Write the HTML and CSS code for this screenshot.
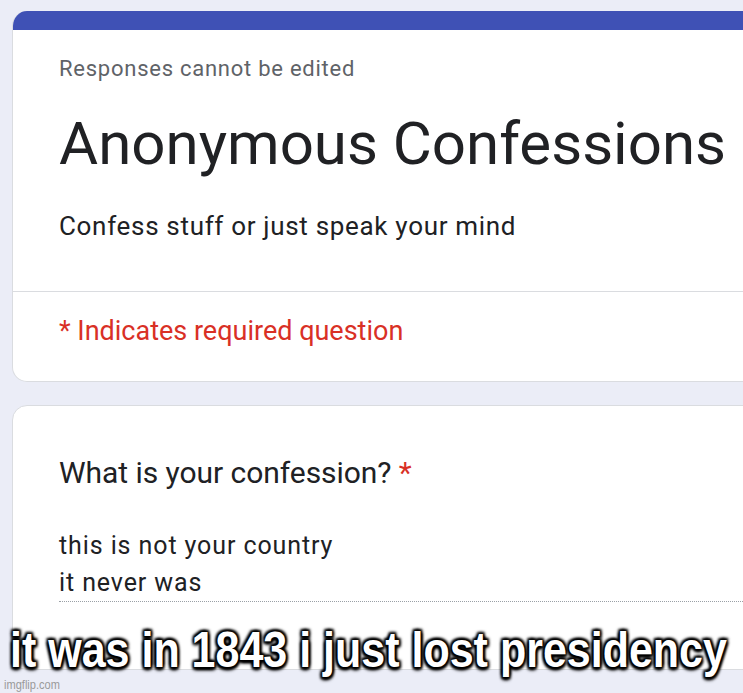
FILE: index.html
```html
<!DOCTYPE html>
<html>
<head>
<meta charset="utf-8">
<link rel="stylesheet" href="styles.css">
</head>
<body>
<div class="page">
  <div class="card header-card">
    <div class="top-bar"></div>
    <div class="header-body">
      <div class="note">Responses cannot be edited</div>
      <h1 class="title">Anonymous Confessions</h1>
      <div class="desc">Confess stuff or just speak your mind</div>
    </div>
    <div class="divider"></div>
    <div class="required">* Indicates required question</div>
  </div>
  <div class="card question-card">
    <div class="question">What is your confession? <span class="star">*</span></div>
    <div class="answer">this is not your country<br>it never was</div>
    <div class="dotted"></div>
  </div>
</div>
<div class="caption">it was in 1843 i just lost presidency</div>
<div class="watermark">imgflip.com</div>
</body>
</html>
```

FILE: styles.css
```css
html, body {
  margin: 0;
  padding: 0;
  width: 743px;
  height: 693px;
  overflow: hidden;
  background: #ebedf7;
  font-family: Roboto, "Liberation Sans", sans-serif;
  position: relative;
}
.page {
  padding: 11px 0 0 12px;
  display: flex;
  flex-direction: column;
  gap: 23px;
}
.card {
  width: 820px;
  background: #fff;
  border: 1px solid #dadce0;
  border-radius: 15px;
  box-sizing: border-box;
  overflow: hidden;
}
.header-card {
  height: 371px;
  border-top: none;
}
.top-bar {
  height: 19px;
  background: #3f51b5;
}
.header-body {
  padding: 27px 0 0 46px;
}
.note {
  font-size: 22px;
  letter-spacing: 0.75px;
  line-height: 24px;
  color: #5f6368;
}
.title {
  margin: 27px 0 0;
  font-size: 60px;
  letter-spacing: 0;
  font-weight: 400;
  line-height: 72px;
  color: #202124;
}
.desc {
  margin-top: 31px;
  font-size: 26px;
  letter-spacing: 0.68px;
  line-height: 30px;
  color: #202124;
}
.divider {
  margin-top: 50px;
  height: 1px;
  background: #dadce0;
}
.required {
  padding: 24px 0 0 46px;
  font-size: 27px;
  line-height: 30px;
  color: #d93025;
}
.question-card {
  height: 265px;
  padding: 50px 0 0 46px;
}
.question {
  font-size: 30px;
  letter-spacing: -0.05px;
  line-height: 34px;
  color: #202124;
}
.star {
  color: #d93025;
}
.answer {
  margin-top: 37px;
  font-size: 25px;
  letter-spacing: 0.9px;
  line-height: 37px;
  color: #202124;
}
.dotted {
  margin-top: 0;
  border-top: 1px dotted #9aa0a6;
}
.caption {
  position: absolute;
  left: 10px;
  top: 620px;
  font-family: "Liberation Sans", Arial, sans-serif;
  font-weight: 700;
  font-size: 50px;
  line-height: 60px;
  color: #fff;
  white-space: nowrap;
  transform: scaleX(0.86);
  transform-origin: left center;
  text-shadow: 0 0 3px #000, 0 0 4px #000, 2px 2px 3px #000, -2px -2px 3px #000, 2px -2px 3px #000, -2px 2px 3px #000, 0 3px 4px #000;
}
.watermark {
  position: absolute;
  left: 4px;
  top: 677px;
  font-family: "Liberation Sans", Arial, sans-serif;
  font-size: 13px;
  transform: scaleX(0.85);
  transform-origin: left center;
  color: #9a9a9a;
}
```
